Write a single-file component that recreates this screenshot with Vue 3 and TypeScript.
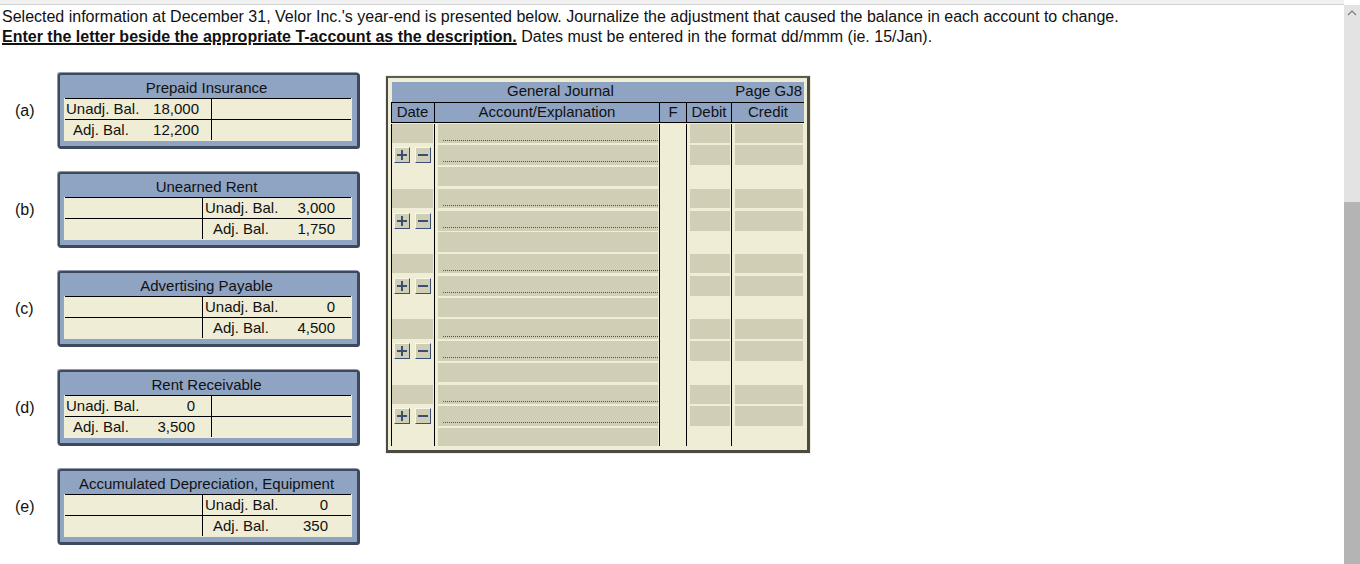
<script setup lang="ts">
interface TAccount {
  letter: string
  title: string
  side: 'debit' | 'credit'
  split: number
  pad: number
  unadj: string
  adj: string
}

const accounts: TAccount[] = [
  { letter: '(a)', title: 'Prepaid Insurance', side: 'debit', split: 147, pad: 12, unadj: '18,000', adj: '12,200' },
  { letter: '(b)', title: 'Unearned Rent', side: 'credit', split: 138, pad: 16, unadj: '3,000', adj: '1,750' },
  { letter: '(c)', title: 'Advertising Payable', side: 'credit', split: 138, pad: 16, unadj: '0', adj: '4,500' },
  { letter: '(d)', title: 'Rent Receivable', side: 'debit', split: 147, pad: 16, unadj: '0', adj: '3,500' },
  { letter: '(e)', title: 'Accumulated Depreciation, Equipment', side: 'credit', split: 138, pad: 23, unadj: '0', adj: '350' }
]

// 5 journal entries, 3 lines each
const lines = Array.from({ length: 15 }, (_, i) => i)
</script>

<template>
  <div class="page">
    <div class="content">
      <div class="topbar"></div>
      <p class="intro">
        Selected information at December 31, Velor Inc.'s year-end is presented below. Journalize the adjustment that caused the balance in each account to change.<br />
        <b class="strong">Enter the letter beside the appropriate T-account as the description.</b> Dates must be entered in the format dd/mmm (ie. 15/Jan).
      </p>

      <div class="work">
        <div class="accounts">
          <div v-for="acc in accounts" :key="acc.letter" class="account-row">
            <span class="letter">{{ acc.letter }}</span>
            <div class="taccount">
              <div class="ttitle">{{ acc.title }}</div>
              <div class="tbody">
                <div
                  v-for="(row, r) in [{ label: 'Unadj. Bal.', value: acc.unadj }, { label: 'Adj. Bal.', value: acc.adj }]"
                  :key="r"
                  class="trow"
                >
                  <div class="tcell left" :style="{ width: acc.split + 'px' }">
                    <template v-if="acc.side === 'debit'">
                      <span class="tlabel" :class="{ indent: r === 1 }">{{ row.label }}</span>
                      <span class="tvalue" :style="{ paddingRight: acc.pad + 'px' }">{{ row.value }}</span>
                    </template>
                  </div>
                  <div class="tcell right">
                    <template v-if="acc.side === 'credit'">
                      <span class="tlabel" :class="{ indent: r === 1 }">{{ row.label }}</span>
                      <span class="tvalue" :style="{ paddingRight: acc.pad + 'px' }">{{ row.value }}</span>
                    </template>
                  </div>
                </div>
              </div>
            </div>
          </div>
        </div>

        <div class="journal">
          <div class="jtitle">
            <span class="jname">General Journal</span>
            <span class="jpage">Page GJ8</span>
          </div>
          <div class="jhead">
            <div class="col date">Date</div>
            <div class="col acct">Account/Explanation</div>
            <div class="col f">F</div>
            <div class="col debit">Debit</div>
            <div class="col credit">Credit</div>
          </div>
          <div class="jbody">
            <div v-for="i in lines" :key="i" class="jrow" :class="{ mid: i % 3 === 1, tail: i % 3 === 2 }">
              <div class="col date">
                <div v-if="i % 3 === 0" class="field"></div>
                <div v-else-if="i % 3 === 1" class="btns">
                  <button class="btn" type="button" aria-label="add">
                    <svg width="12" height="12" viewBox="0 0 12 12"><path d="M6 1v10M1 6h10" stroke="#3b4f75" stroke-width="2" fill="none" /></svg>
                  </button>
                  <button class="btn" type="button" aria-label="remove">
                    <svg width="12" height="12" viewBox="0 0 12 12"><path d="M1 6h10" stroke="#3b4f75" stroke-width="2" fill="none" /></svg>
                  </button>
                </div>
              </div>
              <div class="col acct">
                <div class="field acct-field">
                  <i v-if="i % 3 !== 2" class="dots"></i>
                </div>
              </div>
              <div class="col f"></div>
              <div class="col debit"><div v-if="i % 3 !== 2" class="field"></div></div>
              <div class="col credit"><div v-if="i % 3 !== 2" class="field"></div></div>
            </div>
          </div>
        </div>
      </div>
    </div>

    <div class="scrollbar">
      <svg class="arrow" width="16" height="16" viewBox="0 0 16 16"><path d="M4 10l4-4 4 4" stroke="#7d7d7d" stroke-width="1.2" fill="none" /></svg>
      <div class="thumb"></div>
    </div>
  </div>
</template>

<style>
body {
  background: #fff;
}
</style>

<style scoped>
.page {
  display: flex;
  width: 1360px;
  height: 564px;
  overflow: hidden;
  font-family: "Liberation Sans", Arial, sans-serif;
  color: #111;
  background: #fff;
}

.content {
  flex: 1;
  min-width: 0;
}

.topbar {
  height: 4px;
  background: #f1f1f1;
  border-bottom: 1px solid #d2d2d2;
}

.intro {
  margin: 0;
  padding: 2px 0 0 2px;
  font-size: 16px;
  line-height: 20px;
  white-space: nowrap;
}

.strong {
  text-decoration: underline;
  text-decoration-thickness: 2px;
}

.work {
  display: flex;
  align-items: flex-start;
  padding-top: 25px;
}

.accounts {
  display: flex;
  flex-direction: column;
  gap: 23px;
  padding-top: 1px;
}

.account-row {
  display: flex;
  align-items: center;
  height: 76px;
}

.letter {
  width: 58px;
  padding-left: 15px;
  box-sizing: border-box;
  font-size: 16px;
}

.taccount {
  width: 302px;
  height: 76px;
  box-sizing: border-box;
  padding: 0 5px 5px 4px;
  background: #8fa3c3;
  border: 2px solid #3e4a5c;
  border-bottom-width: 3px;
  border-right-width: 3px;
  border-radius: 3px;
  box-shadow: -1px -1px 0 #8d9ab0;
}

.ttitle {
  height: 23px;
  line-height: 26px;
  padding-right: 3px;
  text-align: center;
  font-size: 15px;
}

.tbody {
  width: 288px;
  height: 43px;
  background: #efedd6;
  padding: 0 1px;
  box-sizing: border-box;
}

.trow {
  display: flex;
  height: 21px;
  box-sizing: border-box;
  border-top: 1px solid #000;
  font-size: 15px;
  line-height: 20px;
}

.tcell {
  display: flex;
  justify-content: space-between;
  box-sizing: border-box;
}

.tcell.left {
  flex: none;
  border-right: 1px solid #000;
}

.tcell.right {
  flex: 1;
}

.tlabel {
  padding-left: 1px;
}

.tlabel.indent {
  padding-left: 8px;
}

.tcell.right .tlabel {
  padding-left: 2px;
}

.tcell.right .tlabel.indent {
  padding-left: 10px;
}

.journal {
  width: 424px;
  height: 377px;
  margin: 4px 0 0 26px;
  box-sizing: border-box;
  padding: 4px 3px 0 3px;
  background: #efedd6;
  border: 2px solid #4b4b42;
  border-top-color: #5c5c52;
  border-bottom-width: 3px;
  border-right-width: 3px;
  box-shadow: 0 0 0 1px #f2f0dc;
  font-size: 15px;
}

.jtitle {
  display: flex;
  height: 20px;
  margin-left: 1px;
  background: #8fa3c3;
  line-height: 18px;
  position: relative;
  justify-content: flex-end;
  padding-right: 2px;
  width: 412px;
  box-sizing: border-box;
}

.jname {
  position: absolute;
  left: 115px;
}

.jhead {
  display: flex;
  height: 21px;
  box-sizing: border-box;
  background: #8fa3c3;
  border-top: 1px solid #000;
  border-bottom: 1px solid #000;
  line-height: 18px;
  text-align: center;
}

.jbody {
  padding-top: 0.5px;
  height: 323px;
  box-sizing: border-box;
  overflow: hidden;
}

.jrow {
  display: flex;
  height: 21.75px;
}

.col {
  flex: none;
  box-sizing: border-box;
  border-left: 1px solid #000;
}

.col.date { width: 43px; }
.col.acct { width: 225px; }
.col.f { width: 27px; }
.col.debit { width: 45px; }
.col.credit { width: 73px; }

.jhead .col.date {
  padding-right: 1px;
}

.field {
  height: 19.25px;
  background: #d0ceb4;
}

.mid .field {
  height: 20px;
}

.date .field {
  margin-right: 1px;
}

.acct-field {
  margin: 0 1px 0 3px;
  position: relative;
}

.dots {
  position: absolute;
  left: 5px;
  right: 0;
  bottom: 2px;
  border-bottom: 1px dotted #555;
}

.mid .dots {
  bottom: 3px;
}

.debit .field {
  margin: 0 1px 0 3px;
}

.credit .field {
  margin: 0 1px 0 3px;
}

.btns {
  display: flex;
  gap: 5px;
  padding: 2px 0 0 2px;
}

.btn {
  width: 16px;
  height: 16px;
  padding: 0;
  display: flex;
  align-items: center;
  justify-content: center;
  box-sizing: border-box;
  background: #d0ceb4;
  border: 1px solid #3b4f75;
  border-top-color: #f7f6e8;
  border-left-color: #f7f6e8;
}

.scrollbar {
  flex: none;
  width: 16px;
  margin-top: 5px;
  background: #e3e3e3;
  display: flex;
  flex-direction: column;
}

.arrow {
  display: block;
  flex: none;
  height: 16px;
  margin-bottom: 181px;
}

.thumb {
  flex: 1;
  background: #b4b4b4;
}
</style>
